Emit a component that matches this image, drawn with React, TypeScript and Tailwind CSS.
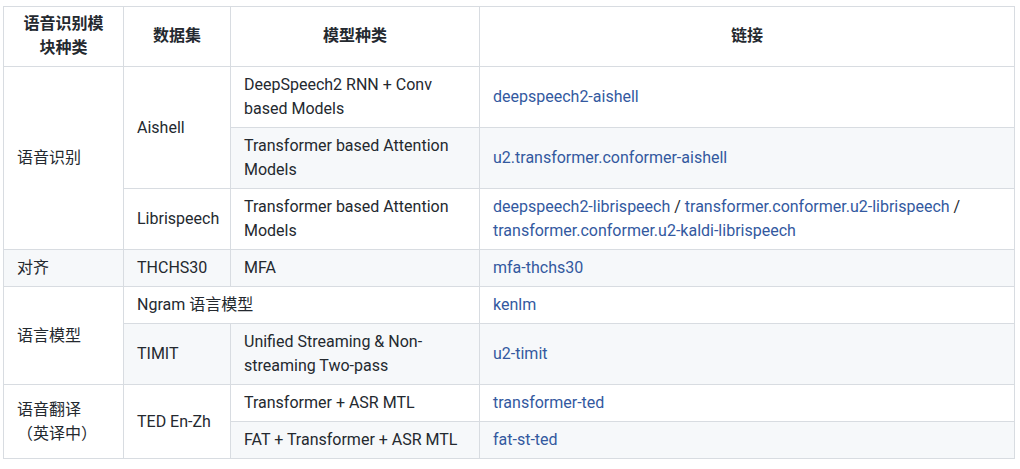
import React from "react"

type Cell = {
  content: React.ReactNode
  rowSpan?: number
  colSpan?: number
}

const link = (text: string) => (
  <a href="#" className="text-[#33599f] no-underline">
    {text}
  </a>
)

const rows: Cell[][] = [
  [
    { content: "语音识别", rowSpan: 3 },
    { content: "Aishell", rowSpan: 2 },
    { content: <>DeepSpeech2 RNN + Conv<br />based Models</> },
    { content: link("deepspeech2-aishell") },
  ],
  [
    { content: <>Transformer based Attention<br />Models</> },
    { content: link("u2.transformer.conformer-aishell") },
  ],
  [
    { content: "Librispeech" },
    { content: <>Transformer based Attention<br />Models</> },
    {
      content: (
        <>
          {link("deepspeech2-librispeech")} / {link("transformer.conformer.u2-librispeech")} /
          <br />
          {link("transformer.conformer.u2-kaldi-librispeech")}
        </>
      ),
    },
  ],
  [{ content: "对齐" }, { content: "THCHS30" }, { content: "MFA" }, { content: link("mfa-thchs30") }],
  [
    { content: "语言模型", rowSpan: 2 },
    { content: "Ngram 语言模型", colSpan: 2 },
    { content: link("kenlm") },
  ],
  [
    { content: "TIMIT" },
    { content: <>Unified Streaming &amp; Non-<br />streaming Two-pass</> },
    { content: link("u2-timit") },
  ],
  [
    { content: <>语音翻译<br />（英译中）</>, rowSpan: 2 },
    { content: "TED En-Zh", rowSpan: 2 },
    { content: "Transformer + ASR MTL" },
    { content: link("transformer-ted") },
  ],
  [{ content: "FAT + Transformer + ASR MTL" }, { content: link("fat-st-ted") }],
]

const headers = ["语音识别模块种类", "数据集", "模型种类", "链接"]

export default function App() {
  return (
    <div
      className="w-[1020px] h-[469px] bg-white pt-[6px] pl-[3px] text-[16px] leading-6 text-[#24292f]"
      style={{ fontFamily: 'Roboto, "Noto Sans CJK SC", sans-serif' }}
    >
      <table className="table-fixed border-collapse w-[1011px]">
        <colgroup>
          <col className="w-[120px]" />
          <col className="w-[107px]" />
          <col className="w-[249px]" />
          <col className="w-[535px]" />
        </colgroup>
        <thead>
          <tr className="bg-white">
            {headers.map((h) => (
              <th
                key={h}
                className="border border-[#d8dce1] px-[13px] pt-[5px] pb-[6px] font-semibold text-center align-middle"
              >
                {h}
              </th>
            ))}
          </tr>
        </thead>
        <tbody>
          {rows.map((row, i) => (
            <tr key={i} className={i % 2 === 1 ? "bg-[#f6f8fa]" : "bg-white"}>
              {row.map((cell, j) => (
                <td
                  key={j}
                  rowSpan={cell.rowSpan}
                  colSpan={cell.colSpan}
                  className="border border-[#d8dce1] px-[13px] py-[6px] align-middle whitespace-nowrap"
                >
                  {cell.content}
                </td>
              ))}
            </tr>
          ))}
        </tbody>
      </table>
    </div>
  )
}
